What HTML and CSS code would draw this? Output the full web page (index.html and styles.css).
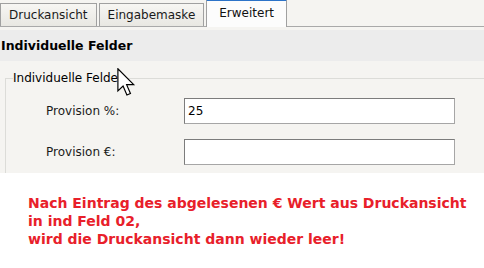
FILE: index.html
```html
<!DOCTYPE html>
<html>
<head>
    <title>Erweitert</title>
    <link rel="stylesheet" href="styles.css">
</head>
<body>
    <div class="panel">
        <div class="tabs">
            <div class="tab">Druckansicht</div>
            <div class="tab">Eingabemaske</div>
            <div class="tab active">Erweitert</div>
        </div>
        <div class="section-title">Individuelle Felder</div>
        <fieldset class="group">
            <legend>Individuelle Felder</legend>
            <div class="row">
                <label for="prov_pct">Provision %:</label>
                <input type="text" id="prov_pct" value="25">
            </div>
            <div class="row">
                <label for="prov_eur">Provision €:</label>
                <input type="text" id="prov_eur" value="">
            </div>
        </fieldset>
        <!-- mouse pointer from the screenshot -->
        <svg class="cursor" width="21" height="31" viewBox="0 0 14 21">
            <path d="M0.5 0.5 L0.5 15.5 L4 12.2 L6.6 18.3 L9 17.3 L6.4 11.3 L11.2 11.3 Z" fill="#fff" stroke="#000" stroke-width="0.8" stroke-linejoin="miter"/>
        </svg>
    </div>
    <p class="note">
        Nach Eintrag des abgelesenen € Wert aus Druckansicht<br>
        in ind Feld 02,<br>
        wird die Druckansicht dann wieder leer!
    </p>
</body>
</html>
```

FILE: styles.css
```css
body {
    margin: 0;
    background-color: #fff;
    font-family: "DejaVu Sans", sans-serif;
    font-size: 12px;
    color: #000;
}

.panel {
    position: relative;
    height: 173px;
    background-color: #f5f4f1;
    overflow: hidden;
}

.tabs {
    display: flex;
    align-items: flex-end;
    height: 26px;
    border-bottom: 1px solid #a9a9a9;
}

.tab {
    height: 22px;
    line-height: 22px;
    padding: 0 8px;
    margin-right: 2px;
    border: 1px solid #a0a0a0;
    border-bottom: none;
    background: linear-gradient(#f7f6f3, #e8e7e2);
    color: #1a1a1a;
}

.tab.active {
    height: 26px;
    line-height: 25px;
    padding: 0 12px;
    background: #fcfcfc;
    border-top: 2px solid #2c73c8;
    margin-bottom: -1px;
    position: relative;
    color: #111;
}

.section-title {
    margin-top: 3px;
    height: 31px;
    line-height: 31px;
    padding-left: 1px;
    background-color: #ececec;
    font-weight: bold;
    font-size: 12.5px;
}

.group {
    margin: 10px 0 0 5px;
    width: 520px;
    padding: 13px 0 10px 0;
    border: 1px solid #dcdcd8;
    border-right: none;
}

.group legend {
    padding: 0;
    margin-left: 7px;
}

.row {
    display: flex;
    align-items: center;
    height: 26px;
    margin-bottom: 15px;
}

.row label {
    width: 138px;
    padding-left: 40px;
    color: #1a1a1a;
}

.row input {
    box-sizing: border-box;
    width: 271px;
    height: 26px;
    padding: 0 3px;
    border: 1px solid #a6a6a6;
    border-top-color: #7c7c7c;
    border-left-color: #7c7c7c;
    font-family: "DejaVu Sans", sans-serif;
    font-size: 12px;
}

.cursor {
    position: absolute;
    left: 117px;
    top: 68px;
}

.note {
    margin: 21px 0 0 28px;
    color: #e8202a;
    font-weight: bold;
    font-size: 14px;
    line-height: 18px;
}
```
